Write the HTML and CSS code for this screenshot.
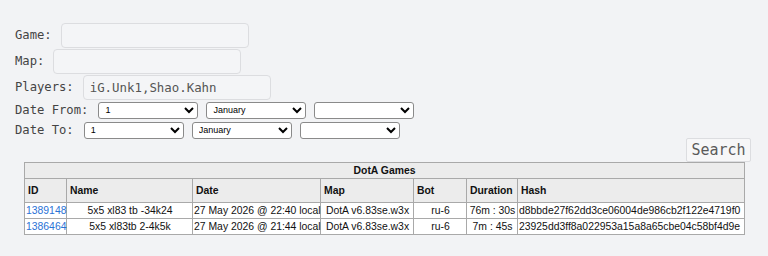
FILE: index.html
```html
<!DOCTYPE html>
<html lang="en">
<head>
  <meta charset="UTF-8">
  <title>DotA Games</title>
  <link rel="stylesheet" href="styles.css">
</head>
<body>
  <form class="search-form">
    <div class="row">
      <label for="game">Game:</label>
      <input type="text" id="game" class="field field-game">
    </div>
    <div class="row">
      <label for="map">Map:</label>
      <input type="text" id="map" class="field">
    </div>
    <div class="row">
      <label for="players">Players:</label>
      <input type="text" id="players" class="field" value="iG.Unk1,Shao.Kahn">
    </div>
    <div class="row date-row">
      <label>Date From:</label>
      <select><option>1</option></select>
      <select><option>January</option></select>
      <select><option></option></select>
    </div>
    <div class="row date-row">
      <label>Date To:</label>
      <select><option>1</option></select>
      <select><option>January</option></select>
      <select><option></option></select>
    </div>
    <div class="search-bar">
      <button type="button" class="search-btn">Search</button>
    </div>
  </form>

  <table class="games">
    <colgroup>
      <col style="width: 42px">
      <col style="width: 126px">
      <col style="width: 128px">
      <col style="width: 93px">
      <col style="width: 53px">
      <col style="width: 51px">
      <col style="width: 227px">
    </colgroup>
    <tr class="caption-row"><th colspan="7">DotA Games</th></tr>
    <tr class="head-row">
      <th>ID</th><th>Name</th><th>Date</th><th>Map</th><th>Bot</th><th>Duration</th><th>Hash</th>
    </tr>
    <tr>
      <td><a href="#">1389148</a></td>
      <td class="c">5x5 xl83 tb -34k24</td>
      <td>27 May 2026 @ 22:40 local</td>
      <td class="c">DotA v6.83se.w3x</td>
      <td class="c">ru-6</td>
      <td class="c">76m : 30s</td>
      <td>d8bbde27f62dd3ce06004de986cb2f122e4719f0</td>
    </tr>
    <tr>
      <td><a href="#">1386464</a></td>
      <td class="c">5x5 xl83tb 2-4k5k</td>
      <td>27 May 2026 @ 21:44 local</td>
      <td class="c">DotA v6.83se.w3x</td>
      <td class="c">ru-6</td>
      <td class="c">7m : 45s</td>
      <td>23925dd3ff8a022953a15a8a65cbe04c58bf4d9e</td>
    </tr>
  </table>
</body>
</html>
```

FILE: styles.css
```css
body {
  margin: 0;
  background-color: #f2f3f5;
  font-family: 'DejaVu Sans Mono', monospace;
  color: #444;
}

.search-form {
  padding: 22px 0 0 15px;
}

.row {
  display: flex;
  align-items: center;
  gap: 9px;
  height: 26px;
  font-size: 12.2px;
}

.field {
  box-sizing: border-box;
  width: 188px;
  height: 25px;
  margin: 0;
  padding: 0 6px;
  border: 1px solid #dcdde0;
  border-radius: 4px;
  background-color: #f4f5f7;
  font-family: 'DejaVu Sans Mono', monospace;
  font-size: 12.4px;
  color: #555;
}

.date-row {
  height: 20px;
  gap: 8px;
}

.date-row label {
  margin-right: 2px;
}

select {
  box-sizing: border-box;
  width: 100px;
  height: 17px;
  margin: 0;
  padding: 0 2px;
  border: 1px solid #8a8a8a;
  border-radius: 3px;
  background-color: #fff;
  font-family: 'Liberation Sans', Arial, sans-serif;
  font-size: 9px;
  color: #000;
}

.search-bar {
  display: flex;
  justify-content: flex-end;
  padding-right: 17px;
  margin-top: -2px;
}

.search-btn {
  box-sizing: border-box;
  width: 65px;
  height: 24px;
  padding: 0;
  border: 1px solid #dcdde0;
  border-radius: 2px;
  background-color: #f7f7f8;
  font-family: 'DejaVu Sans Mono', monospace;
  font-size: 15px;
  color: #5a5a5a;
}

.games {
  margin-left: 24px;
  width: 721px;
  table-layout: fixed;
  border-collapse: collapse;
  border: 1px solid #999;
  font-family: 'Liberation Sans', Arial, sans-serif;
  font-size: 10.4px;
  color: #111;
  background-color: #fff;
}

.games th,
.games td {
  border: 1px solid #a9a9a9;
  white-space: nowrap;
}

.games th {
  background-color: #ececec;
  text-align: left;
  padding: 0 3px;
  font-weight: bold;
}

.caption-row th {
  text-align: center;
  height: 15px;
}

.head-row th {
  height: 23px;
}

.games td {
  height: 15px;
  padding: 0 0 0 1px;
}

.games td.c {
  text-align: center;
}

.games a {
  color: #2a72d6;
  text-decoration: none;
}
```
